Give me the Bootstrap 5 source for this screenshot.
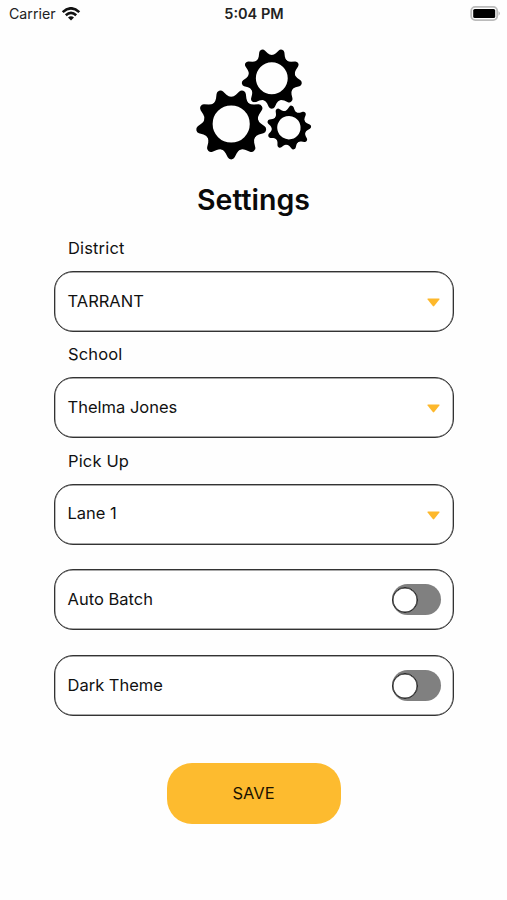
<!DOCTYPE html>
<html lang="en">
<head>
<meta charset="utf-8">
<meta name="viewport" content="width=device-width, initial-scale=1">
<title>Settings</title>
<link href="https://cdn.jsdelivr.net/npm/bootstrap@5.3.0/dist/css/bootstrap.min.css" rel="stylesheet">
<style>
  body { font-family: Inter, "Liberation Sans", sans-serif; font-size: 16.5px; line-height: 20px; color: #111; background: #fefefe; }
  .screen { height: 900px; overflow: hidden; }
  .status { height: 28px; padding: 0 6px 0 9px; font-size: 14.2px; display: grid; grid-template-columns: 1fr auto 1fr; color: #222; }
  .status .wifi { margin-left: 5px; }
  .clock { font-weight: 600; font-size: 14.5px; padding-right: 2px; }
  .gears { width: 130px; height: 125px; margin-top: 12px; margin-left: 2px; }
  h1.title { font-size: 28.5px; font-weight: 600; line-height: 36px; margin: 17px 0 0; color: #0a0a0a; }
  .settings { width: 400px; margin-top: 16px; margin-left: 1px; }
  .settings label { height: 37px; padding: 4px 0 0 14px; display: block; letter-spacing: .15px; }
  .field { height: 61px; border: 1px solid #333; box-shadow: inset 0 0 0 .4px #555; border-radius: 19px; padding: 0 12px 0 12.5px; background: #fff; }
  .field > span { padding-bottom: 2px; }
  .field + label { height: 45.4px; padding-top: 12.3px; }
  .field + .field { margin-top: 24.7px; }
  .caret { width: 13px; height: 9px; margin: 2px 1px 0 0; }
  .toggle { width: 49px; height: 31px; border: 0; border-radius: 16px; background: #808080; padding: 0; }
  .knob { width: 26px; height: 26px; border-radius: 50%; background: #fff; border: 1px solid #222; box-shadow: inset 0 0 0 .5px #222; }
  .save { width: 174px; height: 61px; border-radius: 25px; margin-top: 47px; --bs-btn-bg: #fdbb2f; --bs-btn-hover-bg: #f2ae1f; --bs-btn-color: #1a1200; font-size: 16.5px; }
</style>
<script src="https://cdn.jsdelivr.net/npm/bootstrap@5.3.0/dist/js/bootstrap.bundle.min.js"></script>
</head>
<body>
<main class="screen d-flex flex-column align-items-center">
  <header class="status w-100 align-items-center">
    <div class="d-flex align-items-center"><span>Carrier</span>
      <svg class="wifi" width="20" height="15" viewBox="0 0 20 15" fill="none" stroke="#111" stroke-width="2.6"><path d="M1.7 5.1Q10-2.5 18.3 5.1M4.8 8.3Q10 3.6 15.2 8.3"/><path d="M7 10.5Q10 7.9 13 10.5L10 13.5Z" fill="#111" stroke="none"/></svg>
    </div>
    <div class="clock">5:04 PM</div>
    <svg class="ms-auto" width="31" height="16" viewBox="0 0 31 16"><rect x="1.2" y=".9" width="26" height="13.2" rx="4" fill="#fff" stroke="#bbb" stroke-width="1.8"/><rect x="3.2" y="3" width="22" height="9" rx="1.6" fill="#000"/><path d="M28.6 5.3Q31 7.5 28.6 9.8Z" fill="#aaa"/></svg>
  </header>

  <svg class="gears flex-shrink-0" viewBox="0 0 130 125" role="img" aria-label="Gears">
    <defs>
      <path id="tooth" d="M-27 73Q-20 77-16 84L-10 96Q-7 102 0 102Q7 102 10 96L16 84Q20 77 27 73V60H-27Z"/>
      <g id="teeth">
        <use href="#tooth"/><use href="#tooth" transform="rotate(40)"/><use href="#tooth" transform="rotate(80)"/>
        <use href="#tooth" transform="rotate(120)"/><use href="#tooth" transform="rotate(160)"/><use href="#tooth" transform="rotate(200)"/>
        <use href="#tooth" transform="rotate(240)"/><use href="#tooth" transform="rotate(280)"/><use href="#tooth" transform="rotate(320)"/>
      </g>
      <g id="gear">
        <circle r="66" fill="none" stroke="#000" stroke-width="25"/>
        <use href="#teeth"/>
      </g>
    </defs>
    <use href="#gear" transform="translate(81.8 38.3) scale(.298)"/>
    <!-- white gaps where the gears mesh -->
    <use href="#teeth" transform="translate(41.2 84) scale(.347)" stroke="#fefefe" stroke-width="14"/>
    <use href="#teeth" transform="translate(98.9 87.7) rotate(-13) scale(.218)" stroke="#fefefe" stroke-width="18"/>
    <use href="#gear" transform="translate(41.2 84) scale(.347)"/>
    <use href="#gear" transform="translate(98.9 87.7) rotate(-13) scale(.218)"/>
  </svg>

  <h1 class="title">Settings</h1>

  <form class="settings">
    <label>District</label>
    <div class="field d-flex align-items-center justify-content-between"><span>TARRANT</span>
      <svg class="caret" viewBox="0 0 13 9"><path d="M.8.5H12.2Q13 .8 12.4 1.6L7.2 8Q6.5 8.8 5.8 8L.6 1.6Q0 .8.8.5Z" fill="#fdb82c"/></svg></div>
    <label>School</label>
    <div class="field d-flex align-items-center justify-content-between"><span>Thelma Jones</span>
      <svg class="caret" viewBox="0 0 13 9"><path d="M.8.5H12.2Q13 .8 12.4 1.6L7.2 8Q6.5 8.8 5.8 8L.6 1.6Q0 .8.8.5Z" fill="#fdb82c"/></svg></div>
    <label>Pick Up</label>
    <div class="field d-flex align-items-center justify-content-between"><span>Lane 1</span>
      <svg class="caret" viewBox="0 0 13 9"><path d="M.8.5H12.2Q13 .8 12.4 1.6L7.2 8Q6.5 8.8 5.8 8L.6 1.6Q0 .8.8.5Z" fill="#fdb82c"/></svg></div>
    <div class="field d-flex align-items-center justify-content-between"><span>Auto Batch</span>
      <button type="button" class="toggle d-flex align-items-center" role="switch" aria-checked="false" aria-label="Auto Batch"><span class="knob"></span></button></div>
    <div class="field d-flex align-items-center justify-content-between"><span>Dark Theme</span>
      <button type="button" class="toggle d-flex align-items-center" role="switch" aria-checked="false" aria-label="Dark Theme"><span class="knob"></span></button></div>
  </form>

  <button type="button" class="btn save border-0">SAVE</button>
</main>
</body>
</html>
